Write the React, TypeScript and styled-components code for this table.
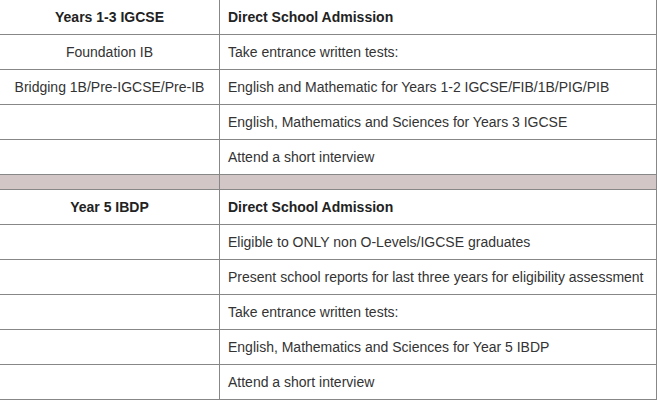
import React from "react";
import styled, { createGlobalStyle } from "styled-components";

const Global = createGlobalStyle`
  html, body { margin: 0; padding: 0; background: #fff; }
  body { font-family: "Liberation Sans", Arial, sans-serif; }
`;

const Page = styled.div`
  width: 658px;
  height: 400px;
  overflow: hidden;
  background: #fff;
`;

const Grid = styled.div`
  display: grid;
  grid-template-columns: 219px 436px;
  grid-auto-rows: 34px;
  gap: 1px;
  padding: 1px;
  background: #878787;
  width: 658px;
  box-sizing: border-box;
  margin: -1px 0 0 -1px;
`;

const Cell = styled.div<{ $center?: boolean; $bold?: boolean }>`
  background: #fff;
  display: flex;
  align-items: center;
  justify-content: ${(p) => (p.$center ? "center" : "flex-start")};
  padding: 0 8px;
  font-size: 14px;
  color: ${(p) => (p.$bold ? "#222" : "#333")};
  font-weight: ${(p) => (p.$bold ? 700 : 400)};
  white-space: nowrap;
`;

const Band = styled.div`
  background: #d2c6c7;
  height: 14px;
  align-self: start;
`;

type Row = [string, string];

const block1: Row[] = [
  ["Foundation IB", "Take entrance written tests:"],
  ["Bridging 1B/Pre-IGCSE/Pre-IB", "English and Mathematic for Years 1-2 IGCSE/FIB/1B/PIG/PIB"],
  ["", "English, Mathematics and Sciences for Years 3 IGCSE"],
  ["", "Attend a short interview"],
];

const block2: Row[] = [
  ["", "Eligible to ONLY non O-Levels/IGCSE graduates"],
  ["", "Present school reports for last three years for eligibility assessment"],
  ["", "Take entrance written tests:"],
  ["", "English, Mathematics and Sciences for Year 5 IBDP"],
  ["", "Attend a short interview"],
];

const BandRow = styled.div`
  display: contents;
`;

export default function App() {
  return (
    <>
      <Global />
      <Page>
        <Grid style={{ gridTemplateRows: "repeat(5, 34px) 14px repeat(6, 34px)" }}>
          <Cell $center $bold>Years 1-3 IGCSE</Cell>
          <Cell $bold>Direct School Admission</Cell>
          {block1.map(([a, b], i) => (
            <React.Fragment key={"a" + i}>
              <Cell $center>{a}</Cell>
              <Cell>{b}</Cell>
            </React.Fragment>
          ))}
          <BandRow>
            <Band />
            <Band />
          </BandRow>
          <Cell $center $bold>Year 5 IBDP</Cell>
          <Cell $bold>Direct School Admission</Cell>
          {block2.map(([a, b], i) => (
            <React.Fragment key={"b" + i}>
              <Cell $center>{a}</Cell>
              <Cell>{b}</Cell>
            </React.Fragment>
          ))}
        </Grid>
      </Page>
    </>
  );
}
